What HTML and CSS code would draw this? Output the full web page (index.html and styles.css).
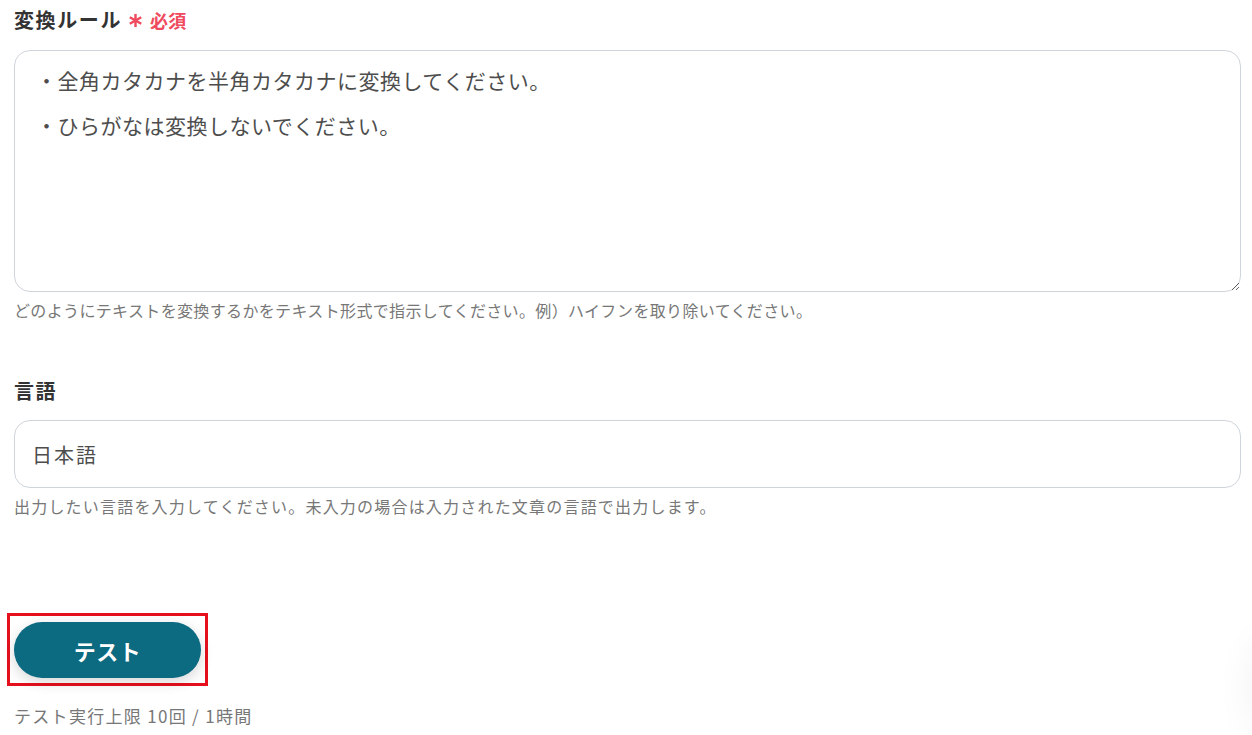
FILE: index.html
```html
<!DOCTYPE html>
<html lang="ja">
<head>
<meta charset="utf-8">
<title>変換ルール</title>
<link rel="stylesheet" href="styles.css">
</head>
<body>
<div class="page">
  <div class="field">
    <div class="label">変換ルール<svg class="req-mark" viewBox="0 0 16 16" width="15" height="15" aria-hidden="true"><g stroke="#ef4a5e" stroke-width="2.6" stroke-linecap="butt"><line x1="8" y1="1" x2="8" y2="15"/><line x1="1.9" y1="4.5" x2="14.1" y2="11.5"/><line x1="1.9" y1="11.5" x2="14.1" y2="4.5"/></g></svg><span class="req">必須</span></div>
    <textarea class="textarea">・全角カタカナを半角カタカナに変換してください。
・ひらがなは変換しないでください。</textarea>
    <div class="help help-rule">どのようにテキストを変換するかをテキスト形式で指示してください。例）ハイフンを取り除いてください。</div>
  </div>
  <div class="field field-lang">
    <div class="label">言語</div>
    <div class="input">日本語</div>
    <div class="help help-lang">出力したい言語を入力してください。未入力の場合は入力された文章の言語で出力します。</div>
  </div>
  <div class="highlight">
    <button class="btn">テスト</button>
  </div>
  <div class="limit">テスト実行上限 10回 / 1時間</div>
</div>
<div class="corner-shadow"></div>
</body>
</html>
```
FILE: styles.css
```css
html, body {
  margin: 0;
  padding: 0;
  background: #fff;
  overflow: hidden;
  height: 735px;
}
body {
  font-family: "Noto Sans CJK JP", "Noto Sans", sans-serif;
  color: #333;
}
.page {
  padding: 6px 11px 0 14px;
}
.label {
  font-size: 20px;
  line-height: 28px;
  font-weight: 700;
  letter-spacing: 0.08em;
  color: #333;
  display: flex;
  align-items: center;
  margin-bottom: 16px;
}
.req-mark {
  display: block;
  margin-left: 6px;
  margin-right: 7px;
}
.req {
  color: #ef4a5e;
  font-size: 18px;
  font-weight: 700;
  letter-spacing: 0.02em;
}
.textarea {
  display: block;
  box-sizing: border-box;
  width: 100%;
  height: 242px;
  margin: 0;
  border: 1px solid #cfd5dc;
  border-radius: 16px;
  padding: 7px 14px 7px 21px;
  font-family: "Noto Sans CJK JP", "Noto Sans", sans-serif;
  font-size: 21px;
  line-height: 45px;
  letter-spacing: 0.5px;
  color: #4d4d4d;
  resize: vertical;
  outline: none;
  background: #fff;
}
.help {
  margin-top: 6px;
  font-size: 16px;
  line-height: 24px;
  color: #777;
}
.help-rule {
  letter-spacing: 0.35px;
}
.help-lang {
  letter-spacing: 1.2px;
}
.field-lang {
  margin-top: 55px;
}
.field-lang .label {
  margin-bottom: 15px;
}
.input {
  box-sizing: border-box;
  height: 68px;
  border: 1px solid #cfd5dc;
  border-radius: 16px;
  padding: 0 17px;
  display: flex;
  align-items: center;
  font-size: 20px;
  letter-spacing: 2px;
  color: #4d4d4d;
}
.highlight {
  display: inline-block;
  margin-top: 95px;
  margin-left: -7px;
  border: 3px solid #e6101d;
  padding: 6px 4px 5px 4px;
}
.btn {
  display: block;
  width: 187px;
  height: 56px;
  border: none;
  border-radius: 28px;
  background: #0c6a81;
  color: #fff;
  font-family: "Noto Sans CJK JP", "Noto Sans", sans-serif;
  font-size: 22px;
  font-weight: 700;
  letter-spacing: 0.02em;
  box-shadow: 0 4px 14px rgba(0, 0, 0, 0.16);
  cursor: pointer;
}
.limit {
  margin-top: 18px;
  font-size: 17px;
  line-height: 24px;
  letter-spacing: 1.3px;
  color: #777;
}
.corner-shadow {
  position: absolute;
  right: -60px;
  top: 640px;
  width: 60px;
  height: 95px;
  border-radius: 30px;
  box-shadow: 0 0 40px rgba(0, 0, 0, 0.06);
}
```
